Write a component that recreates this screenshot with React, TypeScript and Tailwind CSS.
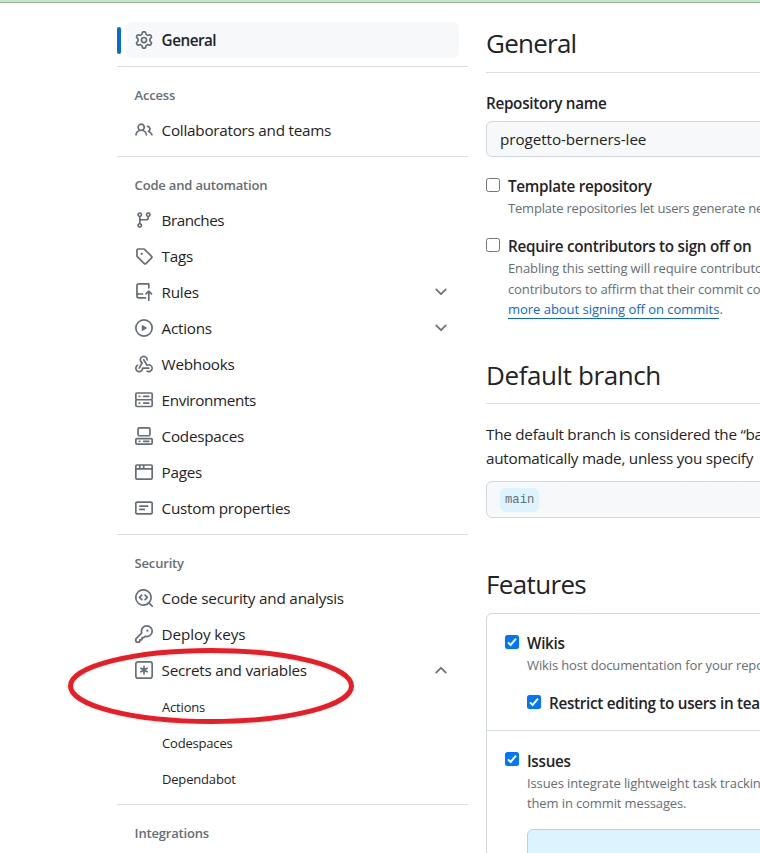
import type { ReactNode } from "react";

const ICONS = {
  gear: "M8 0a8.2 8.2 0 0 1 .701.031C9.444.095 9.99.645 10.16 1.29l.288 1.107c.018.066.079.158.212.224.231.114.454.243.668.386.123.082.233.09.299.071l1.103-.303c.644-.176 1.392.021 1.82.63.27.385.506.792.704 1.218.315.675.111 1.422-.364 1.891l-.814.806c-.049.048-.098.147-.088.294.016.257.016.515 0 .772-.01.147.038.246.088.294l.814.806c.475.469.679 1.216.364 1.891a7.977 7.977 0 0 1-.704 1.217c-.428.61-1.176.807-1.82.63l-1.102-.302c-.067-.019-.177-.011-.3.071a5.909 5.909 0 0 1-.668.386c-.133.066-.194.158-.211.224l-.29 1.106c-.168.646-.715 1.196-1.458 1.26a8.006 8.006 0 0 1-1.402 0c-.743-.064-1.289-.614-1.458-1.26l-.289-1.106c-.018-.066-.079-.158-.212-.224a5.738 5.738 0 0 1-.668-.386c-.123-.082-.233-.09-.299-.071l-1.103.303c-.644.176-1.392-.021-1.82-.63a8.12 8.12 0 0 1-.704-1.218c-.315-.675-.111-1.422.363-1.891l.815-.806c.05-.048.098-.147.088-.294a6.214 6.214 0 0 1 0-.772c.01-.147-.038-.246-.088-.294l-.815-.806C.635 6.045.431 5.298.746 4.623a7.92 7.92 0 0 1 .704-1.217c.428-.61 1.176-.807 1.82-.63l1.102.302c.067.019.177.011.3-.071.214-.143.437-.272.668-.386.133-.066.194-.158.211-.224l.29-1.106C6.009.645 6.556.095 7.299.03 7.53.01 7.764 0 8 0Zm-.571 1.525c-.036.003-.108.036-.137.146l-.289 1.105c-.147.561-.549.967-.998 1.189-.173.086-.34.183-.5.29-.417.278-.97.423-1.529.27l-1.103-.303c-.109-.03-.175.016-.195.045-.22.312-.412.644-.573.99-.014.031-.021.11.059.19l.815.806c.411.406.562.957.53 1.456a4.709 4.709 0 0 0 0 .582c.032.499-.119 1.05-.53 1.456l-.815.806c-.081.08-.073.159-.059.19.162.346.353.677.573.989.02.03.085.076.195.046l1.102-.303c.56-.153 1.113-.008 1.53.27.161.107.328.204.501.29.447.222.85.629.997 1.189l.289 1.105c.029.109.101.143.137.146a6.6 6.6 0 0 0 1.142 0c.036-.003.108-.036.137-.146l.289-1.105c.147-.561.549-.967.998-1.189.173-.086.34-.183.5-.29.417-.278.97-.423 1.529-.27l1.103.303c.109.029.175-.016.195-.045.22-.313.411-.644.573-.99.014-.031.021-.11-.059-.19l-.815-.806c-.411-.406-.562-.957-.53-1.456a4.709 4.709 0 0 0 0-.582c-.032-.499.119-1.05.53-1.456l.815-.806c.081-.08.073-.159.059-.19a6.464 6.464 0 0 0-.573-.989c-.02-.03-.085-.076-.195-.046l-1.102.303c-.56.153-1.113.008-1.53-.27a4.44 4.44 0 0 0-.501-.29c-.447-.222-.85-.629-.997-1.189l-.289-1.105c-.029-.11-.101-.143-.137-.146a6.6 6.6 0 0 0-1.142 0ZM11 8a3 3 0 1 1-6 0 3 3 0 0 1 6 0ZM9.5 8a1.5 1.5 0 1 0-3.001.001A1.5 1.5 0 0 0 9.5 8Z",
  people: "M2 5.5a3.5 3.5 0 1 1 5.898 2.549 5.508 5.508 0 0 1 3.034 4.084.75.75 0 1 1-1.482.235 4 4 0 0 0-7.9 0 .75.75 0 0 1-1.482-.236A5.507 5.507 0 0 1 3.102 8.05 3.493 3.493 0 0 1 2 5.5ZM11 4a3.001 3.001 0 0 1 2.22 5.018 5.01 5.01 0 0 1 2.56 3.012.749.749 0 0 1-.885.954.752.752 0 0 1-.549-.514 3.507 3.507 0 0 0-2.522-2.372.75.75 0 0 1-.574-.73v-.352a.75.75 0 0 1 .416-.672A1.5 1.5 0 0 0 11 5.5.75.75 0 0 1 11 4Zm-5.5-.5a2 2 0 1 0-.001 3.999A2 2 0 0 0 5.5 3.5Z",
  branch: "M9.5 3.25a2.25 2.25 0 1 1 3 2.122V6A2.5 2.5 0 0 1 10 8.5H6a1 1 0 0 0-1 1v1.128a2.251 2.251 0 1 1-1.5 0V5.372a2.25 2.25 0 1 1 1.5 0v1.836A2.493 2.493 0 0 1 6 7h4a1 1 0 0 0 1-1v-.628A2.25 2.25 0 0 1 9.5 3.25Zm-6 0a.75.75 0 1 0 1.5 0 .75.75 0 0 0-1.5 0Zm8.25-.75a.75.75 0 1 0 0 1.5.75.75 0 0 0 0-1.5ZM4.25 12a.75.75 0 1 0 0 1.5.75.75 0 0 0 0-1.5Z",
  tag: "M1 7.775V2.75C1 1.784 1.784 1 2.75 1h5.025c.464 0 .91.184 1.238.513l6.25 6.25a1.75 1.75 0 0 1 0 2.474l-5.026 5.026a1.75 1.75 0 0 1-2.474 0l-6.25-6.25A1.752 1.752 0 0 1 1 7.775Zm1.5 0c0 .066.026.13.073.177l6.25 6.25a.25.25 0 0 0 .354 0l5.025-5.025a.25.25 0 0 0 0-.354l-6.25-6.25a.25.25 0 0 0-.177-.073H2.75a.25.25 0 0 0-.25.25ZM6 5a1 1 0 1 1 0 2 1 1 0 0 1 0-2Z",
  push: "M1 2.5A2.5 2.5 0 0 1 3.5 0h8.75a.75.75 0 0 1 .75.75v3.5a.75.75 0 0 1-1.5 0V1.5h-8a1 1 0 0 0-1 1v6.708A2.493 2.493 0 0 1 3.5 9h3.25a.75.75 0 0 1 0 1.5H3.5a1 1 0 0 0 0 2h5.75a.75.75 0 0 1 0 1.5H3.5A2.5 2.5 0 0 1 1 11.5Zm13.23 7.79h-.001l-1.224-1.224v6.184a.75.75 0 0 1-1.5 0V9.066L10.28 10.29a.75.75 0 0 1-1.06-1.061l2.505-2.504a.75.75 0 0 1 1.06 0L15.29 9.23a.751.751 0 0 1-.018 1.042.751.751 0 0 1-1.042.018Z",
  play: "M8 0a8 8 0 1 1 0 16A8 8 0 0 1 8 0ZM1.5 8a6.5 6.5 0 1 0 13 0 6.5 6.5 0 0 0-13 0Zm4.879-2.773 4.264 2.559a.25.25 0 0 1 0 .428l-4.264 2.559A.25.25 0 0 1 6 10.559V5.442a.25.25 0 0 1 .379-.215Z",
  webhook: "M5.5 4.25a2.25 2.25 0 0 1 4.5 0 .75.75 0 0 0 1.5 0 3.75 3.75 0 1 0-6.14 2.889l-2.272 4.258a.75.75 0 0 0 1.324.706L7 7.25a.75.75 0 0 0-.309-1.015A2.25 2.25 0 0 1 5.5 4.25ZM7.364 3.607a.75.75 0 0 1 1.03.257l2.608 4.349a3.75 3.75 0 1 1-.628 6.785.75.75 0 0 1 .752-1.299 2.25 2.25 0 1 0-.033-3.88.75.75 0 0 1-1.03-.256L7.107 4.636a.75.75 0 0 1 .257-1.03ZM2.9 8.776A.75.75 0 0 1 2.625 9.8 2.25 2.25 0 1 0 6 11.75a.75.75 0 0 1 .75-.751h5.5a.75.75 0 0 1 0 1.5H7.425a3.751 3.751 0 1 1-5.55-3.998.75.75 0 0 1 1.024.274Z",
  server: "M1.75 1h12.5c.966 0 1.75.784 1.75 1.75v4c0 .372-.116.717-.314 1 .198.283.314.628.314 1v4a1.75 1.75 0 0 1-1.75 1.75H1.75A1.75 1.75 0 0 1 0 12.75v-4c0-.358.109-.707.314-1a1.739 1.739 0 0 1-.314-1v-4C0 1.784.784 1 1.75 1ZM1.5 2.75v4c0 .138.112.25.25.25h12.5a.25.25 0 0 0 .25-.25v-4a.25.25 0 0 0-.25-.25H1.75a.25.25 0 0 0-.25.25Zm.25 5.75a.25.25 0 0 0-.25.25v4c0 .138.112.25.25.25h12.5a.25.25 0 0 0 .25-.25v-4a.25.25 0 0 0-.25-.25ZM7 4.75A.75.75 0 0 1 7.75 4h4.5a.75.75 0 0 1 0 1.5h-4.5A.75.75 0 0 1 7 4.75ZM7.75 10h4.5a.75.75 0 0 1 0 1.5h-4.5a.75.75 0 0 1 0-1.5ZM3 4.75A.75.75 0 0 1 3.75 4h.5a.75.75 0 0 1 0 1.5h-.5A.75.75 0 0 1 3 4.75ZM3.75 10h.5a.75.75 0 0 1 0 1.5h-.5a.75.75 0 0 1 0-1.5Z",
  codespaces: "M0 11.25c0-.966.784-1.75 1.75-1.75h12.5c.966 0 1.75.784 1.75 1.75v3A1.75 1.75 0 0 1 14.25 16H1.75A1.75 1.75 0 0 1 0 14.25Zm2-9.5C2 .784 2.784 0 3.75 0h8.5C13.216 0 14 .784 14 1.75v5a1.75 1.75 0 0 1-1.75 1.75h-8.5A1.75 1.75 0 0 1 2 6.75Zm1.75-.25a.25.25 0 0 0-.25.25v5c0 .138.112.25.25.25h8.5a.25.25 0 0 0 .25-.25v-5a.25.25 0 0 0-.25-.25Zm-2 9.5a.25.25 0 0 0-.25.25v3c0 .138.112.25.25.25h12.5a.25.25 0 0 0 .25-.25v-3a.25.25 0 0 0-.25-.25ZM7 12.75a.75.75 0 0 1 .75-.75h4.5a.75.75 0 0 1 0 1.5h-4.5a.75.75 0 0 1-.75-.75Zm-4 0a.75.75 0 0 1 .75-.75h.5a.75.75 0 0 1 0 1.5h-.5a.75.75 0 0 1-.75-.75Z",
  browser: "M0 2.75C0 1.784.784 1 1.75 1h12.5c.966 0 1.75.784 1.75 1.75v10.5A1.75 1.75 0 0 1 14.25 15H1.75A1.75 1.75 0 0 1 0 13.25ZM14.5 6h-13v7.25c0 .138.112.25.25.25h12.5a.25.25 0 0 0 .25-.25Zm-6-3.5v2h6V2.75a.25.25 0 0 0-.25-.25ZM5 2.5v2h2v-2Zm-3.25 0a.25.25 0 0 0-.25.25V4.5h2v-2Z",
  note: "M0 3.75C0 2.784.784 2 1.75 2h12.5c.966 0 1.75.784 1.75 1.75v8.5A1.75 1.75 0 0 1 14.25 14H1.75A1.75 1.75 0 0 1 0 12.25Zm1.75-.25a.25.25 0 0 0-.25.25v8.5c0 .138.112.25.25.25h12.5a.25.25 0 0 0 .25-.25v-8.5a.25.25 0 0 0-.25-.25ZM3.5 6.25a.75.75 0 0 1 .75-.75h7a.75.75 0 0 1 0 1.5h-7a.75.75 0 0 1-.75-.75Zm.75 2.25h4a.75.75 0 0 1 0 1.5h-4a.75.75 0 0 1 0-1.5Z",
  codescan: "M8.47 4.97a.75.75 0 0 0 0 1.06L9.94 7.5 8.47 8.97a.75.75 0 1 0 1.06 1.06l2-2a.75.75 0 0 0 0-1.06l-2-2a.75.75 0 0 0-1.06 0ZM6.53 6.03a.75.75 0 0 0-1.06-1.06l-2 2a.75.75 0 0 0 0 1.06l2 2a.75.75 0 1 0 1.06-1.06L5.06 7.5l1.47-1.47ZM12.246 13.307a7.501 7.501 0 1 1 1.06-1.06l2.474 2.473a.749.749 0 0 1-.326 1.275.749.749 0 0 1-.734-.215ZM1.5 7.5a6.002 6.002 0 0 0 3.608 5.504 6.002 6.002 0 0 0 6.486-1.117.748.748 0 0 1 .292-.293A6 6 0 1 0 1.5 7.5Z",
  key: "M10.5 0a5.499 5.499 0 1 1-1.288 10.848l-.932.932a.749.749 0 0 1-.53.22H7v.75a.749.749 0 0 1-.22.53l-.5.5a.749.749 0 0 1-.53.22H5v.75a.749.749 0 0 1-.22.53l-.5.5a.749.749 0 0 1-.53.22h-2A1.75 1.75 0 0 1 0 14.25v-2c0-.199.079-.389.22-.53l4.932-4.932A5.5 5.5 0 0 1 10.5 0Zm-4 5.5c-.001.431.069.86.205 1.269a.75.75 0 0 1-.181.768L1.5 12.56v1.69c0 .138.112.25.25.25h1.69l.06-.06v-1.19a.75.75 0 0 1 .75-.75h1.19l.06-.06v-1.19a.75.75 0 0 1 .75-.75h1.19l1.023-1.025a.75.75 0 0 1 .768-.18A4 4 0 1 0 6.5 5.5ZM11 6a1 1 0 1 1 0-2 1 1 0 0 1 0 2Z",
  asterisk: "M0 2.75A2.75 2.75 0 0 1 2.75 0h10.5A2.75 2.75 0 0 1 16 2.75v10.5A2.75 2.75 0 0 1 13.25 16H2.75A2.75 2.75 0 0 1 0 13.25ZM2.75 1.5c-.69 0-1.25.56-1.25 1.25v10.5c0 .69.56 1.25 1.25 1.25h10.5c.69 0 1.25-.56 1.25-1.25V2.75c0-.69-.56-1.25-1.25-1.25ZM8 4a.75.75 0 0 1 .75.75V6.7l1.69-.975a.75.75 0 0 1 .75 1.3L9.5 8l1.69.976a.75.75 0 0 1-.75 1.298L8.75 9.3v1.951a.75.75 0 0 1-1.5 0V9.299l-1.69.976a.75.75 0 0 1-.75-1.3L6.5 8l-1.69-.975a.75.75 0 0 1 .75-1.3l1.69.976V4.75A.75.75 0 0 1 8 4Z",
  chevron: "M12.78 5.22a.749.749 0 0 1 0 1.06l-4.25 4.25a.749.749 0 0 1-1.06 0L3.22 6.28a.749.749 0 1 1 1.06-1.06L8 8.939l3.72-3.719a.749.749 0 0 1 1.06 0Z",
};

type IconName = keyof typeof ICONS;

function Icon({ name, className = "" }: { name: IconName; className?: string }) {
  return (
    <svg viewBox="0 0 16 16" className={`size-[18px] shrink-0 fill-[#656d76] ${className}`} aria-hidden="true">
      <path d={ICONS[name]} />
    </svg>
  );
}

interface NavItemProps {
  icon: IconName;
  children: ReactNode;
  chevron?: "up" | "down";
  tracking?: string;
}

function NavItem({ icon, children, chevron, tracking = "" }: NavItemProps) {
  return (
    <li className="flex h-9 items-center gap-[8.6px] px-[9px]">
      <Icon name={icon} />
      <span className={`grow ${tracking}`}>{children}</span>
      {chevron && <Icon name="chevron" className={chevron === "up" ? "rotate-180" : ""} />}
    </li>
  );
}

function SubItem({ children }: { children: ReactNode }) {
  return <li className="flex h-9 items-center pt-[3px] pl-9 text-[13px] tracking-[-0.18px]">{children}</li>;
}

function NavGroup({ title, children }: { title: string; children?: ReactNode }) {
  return (
    <section className="mt-2 border-t border-[#d8dee4]">
      <h3 className="h-[45px] pt-[18px] pl-[17.6px] text-[13px] leading-5 font-semibold tracking-[-0.18px] text-[#656d76]">{title}</h3>
      <ul className="px-[9px]">{children}</ul>
    </section>
  );
}

function Checkbox({ checked = false }: { checked?: boolean }) {
  if (!checked) return <span className="size-[14px] shrink-0 rounded-[2.5px] border border-[#767676] bg-white" />;
  return (
    <span className="flex size-[14px] shrink-0 items-center justify-center rounded-[2.5px] bg-[#0075ff]">
      <svg viewBox="0 0 14 14" className="size-[14px] fill-none stroke-white stroke-2" aria-hidden="true">
        <path d="M3 7.4 5.6 10 11 3.6" />
      </svg>
    </span>
  );
}

function Option({ label, checked, children }: { label: string; checked?: boolean; children?: ReactNode }) {
  return (
    <div className="flex gap-2">
      <div className="flex h-6 items-center pb-[3px]">
        <Checkbox checked={checked} />
      </div>
      <div>
        <p className="leading-6 font-semibold tracking-[-0.29px]">{label}</p>
        <div className="text-[13px] leading-[20.25px] tracking-[-0.12px] text-[#656d76]">{children}</div>
      </div>
    </div>
  );
}

export default function App() {
  return (
    <div className="relative flex h-[853px] w-[760px] flex-col overflow-hidden bg-white font-['Open_Sans','Noto_Sans',sans-serif] text-[15.25px] tracking-[-0.25px] whitespace-nowrap text-[#1f2328]">
      <div className="h-[3px] shrink-0 border-b border-[#94b394] bg-[#c8e6c9]" />
      <div className="flex min-h-0 grow">
        <nav className="ml-[117px] w-[351px] shrink-0 pt-[19px]">
          <div className="flex h-9 items-center gap-[5px] pr-[9px]">
            <span className="h-[27px] w-1 rounded-md bg-[#0969da]" />
            <div className="flex h-9 grow items-center gap-[8.6px] rounded-md bg-[#f6f8fa] px-[9px] font-semibold tracking-[-0.5px]">
              <Icon name="gear" />
              General
            </div>
          </div>
          <NavGroup title="Access">
            <NavItem icon="people">Collaborators and teams</NavItem>
          </NavGroup>
          <NavGroup title="Code and automation">
            <NavItem icon="branch" tracking="tracking-[-0.5px]">Branches</NavItem>
            <NavItem icon="tag">Tags</NavItem>
            <NavItem icon="push" chevron="down">Rules</NavItem>
            <NavItem icon="play" chevron="down">Actions</NavItem>
            <NavItem icon="webhook">Webhooks</NavItem>
            <NavItem icon="server" tracking="tracking-[-0.38px]">Environments</NavItem>
            <NavItem icon="codespaces">Codespaces</NavItem>
            <NavItem icon="browser">Pages</NavItem>
            <NavItem icon="note">Custom properties</NavItem>
          </NavGroup>
          <NavGroup title="Security">
            <NavItem icon="codescan" tracking="tracking-[-0.2px]">Code security and analysis</NavItem>
            <NavItem icon="key" tracking="tracking-[-0.12px]">Deploy keys</NavItem>
            <NavItem icon="asterisk" chevron="up">Secrets and variables</NavItem>
            <SubItem>Actions</SubItem>
            <SubItem>Codespaces</SubItem>
            <SubItem>Dependabot</SubItem>
          </NavGroup>
          <NavGroup title="Integrations" />
        </nav>

        <main className="ml-[18px] min-w-0 grow overflow-hidden pt-5">
          <h1 className="h-[50px] border-b border-[#d8dee4] text-[26px] leading-10 tracking-[-0.75px]">General</h1>
          <p className="mt-[18px] leading-6 font-semibold tracking-[-0.3px]">Repository name</p>
          <div className="mt-[6px] flex h-9 w-[396px] items-center rounded-md border border-[#d0d7de] bg-[#f6f8fa] px-[13px] tracking-[-0.08px]">
            progetto-berners-lee
          </div>

          <div className="mt-[17px]">
            <Option label="Template repository">
              <span className="tracking-[-0.2px]">Template repositories let users generate ne</span>
            </Option>
          </div>
          <div className="mt-4">
            <Option label="Require contributors to sign off on">
              Enabling this setting will require contributo
              <br />
              contributors to affirm that their commit co
              <br />
              <a className="border-b border-[#0969da] tracking-[-0.03px] text-[#0969da]">more about signing off on commits</a>.
            </Option>
          </div>

          <h2 className="mt-[35px] h-[50px] border-b border-[#d8dee4] pt-px text-[26px] leading-10 tracking-[-0.4px]">Default branch</h2>
          <p className="mt-[18px] leading-6">
            The default branch is considered the “ba
            <br />
            automatically made, unless you specify
          </p>
          <div className="mt-[11px] flex h-[37px] w-[396px] items-center rounded-md border border-[#d0d7de] bg-[#f6f8fa] px-[13px]">
            <span className="rounded-md bg-[#ddf4ff] px-[5px] font-['Liberation_Mono',monospace] text-[12.2px] leading-6 tracking-normal text-[#656d76]">
              main
            </span>
          </div>

          <h2 className="mt-[46px] h-[49px] text-[26px] leading-10 tracking-[-0.65px]">Features</h2>
          <div className="h-[300px] w-[396px] rounded-md border border-[#d0d7de]">
            <div className="h-[117px] border-b border-[#d8dee4] pt-[17px] pl-[18px]">
              <Option checked label="Wikis">Wikis host documentation for your repo</Option>
              <div className="mt-4 pl-[22px]">
                <Option checked label="Restrict editing to users in tea" />
              </div>
            </div>
            <div className="pt-[17.5px] pl-[18px]">
              <Option checked label="Issues">
                Issues integrate lightweight task trackin
                <br />
                them in commit messages.
                <div className="mt-4 h-20 w-[340px] rounded-md border border-[#a5d6ff] bg-[#ddf4ff]" />
              </Option>
            </div>
          </div>
        </main>
      </div>

      <svg className="absolute top-[648px] left-[68px] h-[76px] w-[286px] fill-none stroke-[#ed1c24] stroke-5" viewBox="0 0 286 76" aria-hidden="true">
        <ellipse cx="143" cy="38" rx="140.5" ry="35.5" />
      </svg>
    </div>
  );
}
